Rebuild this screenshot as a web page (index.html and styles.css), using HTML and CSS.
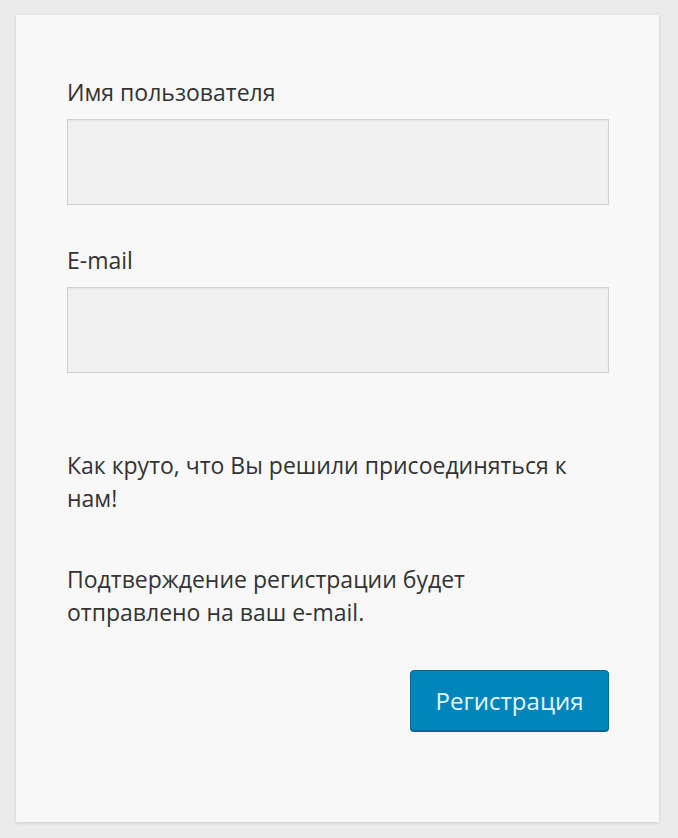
FILE: index.html
```html
<!DOCTYPE html>
<html lang="ru">
<head>
<meta charset="utf-8">
<link rel="stylesheet" href="styles.css">
</head>
<body>
<div class="card">
  <form class="form">
    <label class="label" for="user">Имя пользователя</label>
    <input class="input" id="user" type="text">
    <label class="label label-second" for="mail">E-mail</label>
    <input class="input" id="mail" type="email">
    <p class="note note-first">Как круто, что Вы решили присоединяться к нам!</p>
    <p class="note">Подтверждение регистрации будет отправлено на ваш e-mail.</p>
    <div class="actions">
      <button class="btn" type="button">Регистрация</button>
    </div>
  </form>
</div>
</body>
</html>
```

FILE: styles.css
```css
html, body {
  margin: 0;
  padding: 0;
}
body {
  background: #ebebeb;
  font-family: "Open Sans", "Noto Sans", sans-serif;
  color: #333;
  height: 838px;
  padding-top: 15px;
  box-sizing: border-box;
}
.card {
  margin: 0 19px 0 16px;
  height: 807px;
  background: #f8f8f8;
  box-shadow: 0 1px 3px rgba(0,0,0,0.13);
  box-sizing: border-box;
  padding: 60px 50px 0 51px;
}
.form {
  display: flex;
  flex-direction: column;
}
.label {
  font-size: 23px;
  line-height: 34px;
  margin-bottom: 10px;
  color: #333;
}
.label-second {
  margin-top: 38px;
}
.input {
  height: 86px;
  box-sizing: border-box;
  border: 1px solid #cfcfcf;
  background: #f2f1f1;
  box-shadow: inset 0 1px 2px rgba(0,0,0,0.05);
  margin: 0;
  padding: 0 10px;
  font: inherit;
}
.note {
  font-size: 23px;
  line-height: 33px;
  margin: 48px 0 0;
  max-width: 525px;
  color: #333;
}
.note-first {
  margin-top: 76px;
}
.actions {
  display: flex;
  justify-content: flex-end;
  margin-top: 41px;
}
.btn {
  width: 199px;
  height: 61px;
  background: #0085ba;
  border: 1px solid #006799;
  border-radius: 4px;
  box-shadow: 0 1px 0 #006799;
  color: #e3f6fd;
  font-family: "Open Sans", "Noto Sans", sans-serif;
  font-size: 24px;
  padding: 0;
  cursor: pointer;
}
```
